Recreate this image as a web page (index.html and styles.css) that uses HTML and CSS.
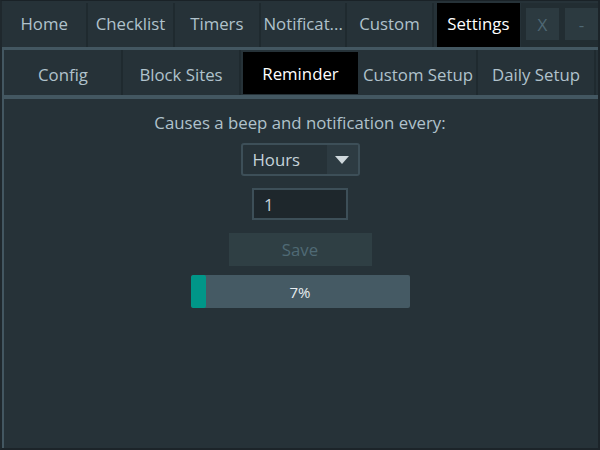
FILE: index.html
```html
<!DOCTYPE html>
<html>
<head>
<meta charset="utf-8">
<link rel="stylesheet" href="styles.css">
</head>
<body>
<div class="window">
  <div class="topbar">
    <div class="tab">Home</div>
    <div class="tab">Checklist</div>
    <div class="tab">Timers</div>
    <div class="tab">Notificat...</div>
    <div class="tab">Custom</div>
    <div class="tab active">Settings</div>
    <div class="controls">
      <div class="ctl">X</div>
      <div class="ctl">-</div>
    </div>
  </div>
  <div class="rule"></div>
  <div class="subbar">
    <div class="subtab">Config</div>
    <div class="subtab">Block Sites</div>
    <div class="subtab active">Reminder</div>
    <div class="subtab">Custom Setup</div>
    <div class="subtab">Daily Setup</div>
  </div>
  <div class="rule rule2"></div>
  <div class="content">
    <div class="label">Causes a beep and notification every:</div>
    <div class="select">
      <span class="select-text">Hours</span>
      <span class="select-arrow"><svg width="14" height="8" viewBox="0 0 14 8"><path d="M0 0H14L7 8Z" fill="#cfd8dc"/></svg></span>
    </div>
    <div class="input">1</div>
    <div class="save">Save</div>
    <div class="progress">
      <div class="fill" style="width:7%"></div>
      <span class="ptext">7%</span>
    </div>
  </div>
</div>
</body>
</html>
```
FILE: styles.css
```css
* { box-sizing: border-box; }
html, body { margin: 0; padding: 0; }
body {
  width: 600px;
  height: 450px;
  overflow: hidden;
  background: #263238;
  font-family: "Open Sans", "Noto Sans", sans-serif;
}
.window {
  width: 600px;
  height: 450px;
  border-top: 1px solid #1a2227;
  border-left: 2px solid #1f282d;
  border-right: 2px solid #1c2429;
  border-bottom: 2px solid #1c2429;
  display: flex;
  flex-direction: column;
  background: #263238;
}
.topbar {
  display: flex;
  height: 46px;
  padding-top: 1px;
}
.tab {
  width: 87px;
  height: 44px;
  border-right: 2px solid #1f2a2f;
  color: #b0c2cc;
  font-size: 16.8px;
  display: flex;
  align-items: center;
  justify-content: center;
  white-space: nowrap;
  margin: 1px 0;
  padding-bottom: 3px;
}
.tab.active {
  background: #000;
  color: #fff;
  border-right: none;
  width: 84px;
  margin-left: 3px;
}
.controls {
  flex: 1;
  margin-left: 1px;
  margin-top: 1px;
  height: 44px;
  background: #222d32;
  display: flex;
  gap: 6px;
  padding: 5px 0 5px 5px;
}
.ctl {
  width: 33px;
  height: 32px;
  background: #2c3a40;
  color: #4f6874;
  font-size: 17px;
  display: flex;
  align-items: center;
  justify-content: center;
}
.rule {
  height: 3px;
  background: #435761;
}
.subbar {
  display: flex;
  height: 45px;
  padding-left: 1px;
  border-left: 2px solid #435761;
}
.subtab {
  width: 118px;
  height: 45px;
  border-right: 2px solid #1f2a2f;
  color: #b0c2cc;
  font-size: 16.8px;
  display: flex;
  align-items: center;
  justify-content: center;
  white-space: nowrap;
  padding-top: 3px;
}
.subtab.active {
  background: #000;
  color: #fff;
  width: 115px;
  margin-left: 2px;
  margin-right: 2px;
  height: 42px;
  margin-top: 2px;
  padding-top: 1px;
  border-right: none;
}
.rule2 { height: 4px; }
.content {
  flex: 1;
  border-left: 2px solid #435761;
  display: flex;
  flex-direction: column;
  align-items: center;
  padding-top: 12px;
  padding-right: 2px;
}
.label {
  color: #b0c2cc;
  font-size: 16.8px;
  line-height: 24px;
  white-space: nowrap;
}
.select {
  margin-top: 8px;
  width: 119px;
  height: 33px;
  border: 2px solid #3d4f58;
  border-radius: 3px;
  display: flex;
  background: #263238;
}
.select-text {
  flex: 1;
  color: #c5d3da;
  font-size: 16.8px;
  display: flex;
  align-items: center;
  padding-left: 10px;
}
.select-arrow {
  width: 31px;
  background: #2d3b42;
  display: flex;
  align-items: center;
  justify-content: center;
}
.input {
  margin-top: 12px;
  width: 96px;
  height: 32px;
  background: #1e272c;
  border: 2px solid #3d4f58;
  color: #c5d3da;
  font-size: 16.8px;
  display: flex;
  align-items: center;
  padding-left: 10px;
}
.save {
  margin-top: 13px;
  width: 143px;
  height: 33px;
  background: #2f3f44;
  color: #4f6a75;
  font-size: 16.8px;
  display: flex;
  align-items: center;
  justify-content: center;
}
.progress {
  margin-top: 9px;
  width: 219px;
  height: 33px;
  background: #455a64;
  border-radius: 2px;
  position: relative;
  display: flex;
  align-items: center;
  justify-content: center;
  overflow: hidden;
}
.fill {
  position: absolute;
  left: 0;
  top: 0;
  bottom: 0;
  background: #009688;
  border-radius: 2px;
}
.ptext {
  position: relative;
  color: #e6ecef;
  font-size: 15px;
}
```
